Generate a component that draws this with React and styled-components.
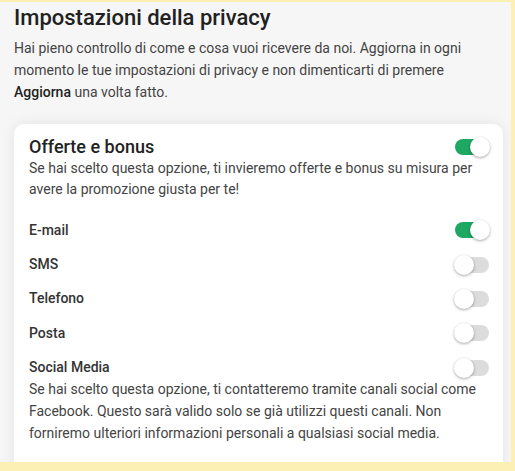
import React, { useState } from "react";
import styled, { createGlobalStyle } from "styled-components";

const Global = createGlobalStyle`
  html, body { margin: 0; padding: 0; background: #fdf0b4; }
  body { font-family: Roboto, "Noto Sans", Arial, sans-serif; }
  * { box-sizing: border-box; }
`;

const Frame = styled.div`
  width: 515px;
  height: 471px;
  background: #fdf0b4;
  padding: 2px 4px 9px 0;
`;

const Panel = styled.div`
  height: 460px;
  background: #f6f6f6;
  overflow: hidden;
  padding: 0 8px 0 14px;
`;

const Title = styled.h1`
  margin: 0;
  padding-top: 1.5px;
  font-size: 22px;
  line-height: 28px;
  font-weight: 500;
  color: #212121;
`;

const Intro = styled.p`
  margin: 5px 0 0;
  font-size: 14px;
  line-height: 22px;
  color: #444;
  strong { font-weight: 500; color: #222; }
`;

const Card = styled.section`
  margin-top: 21.5px;
  background: #fff;
  border-radius: 10px;
  box-shadow: 0 0 14px rgba(0, 0, 0, 0.08);
  padding: 12px 15px 20px;
`;

const Head = styled.div`
  display: flex;
  align-items: center;
  justify-content: space-between;
`;

const CardTitle = styled.h2`
  margin: 0;
  font-size: 18px;
  line-height: 22px;
  font-weight: 500;
  color: #222;
`;

const Desc = styled.p`
  margin: 0;
  font-size: 14px;
  line-height: ${(p) => p.$lh || "21px"};
  color: #444;
`;

const List = styled.div`
  margin-top: 13px;
`;

const Item = styled.div`
  padding: 6.7px 0;
`;

const Label = styled.span`
  font-size: 14px;
  line-height: 21px;
  font-weight: 500;
  color: #333;
`;

const SwitchBox = styled.button`
  position: relative;
  width: 36px;
  height: 20px;
  margin-right: -2px;
  padding: 0;
  border: 0;
  background: none;
  cursor: pointer;
  flex-shrink: 0;
`;

const Track = styled.span`
  position: absolute;
  left: 1px;
  right: 1px;
  top: 2px;
  height: 16px;
  border-radius: 8px;
  background: ${(p) => (p.$on ? "#1fa862" : "#dcdcdc")};
`;

const Thumb = styled.span`
  position: absolute;
  top: 0;
  left: ${(p) => (p.$on ? "16px" : "0")};
  width: 20px;
  height: 20px;
  border-radius: 50%;
  background: #fff;
  box-shadow: 0 1px 3px rgba(0, 0, 0, 0.35);
`;

function Switch({ on, onClick }) {
  return (
    <SwitchBox type="button" onClick={onClick} aria-pressed={on}>
      <Track $on={on} />
      <Thumb $on={on} />
    </SwitchBox>
  );
}

const channels = ["E-mail", "SMS", "Telefono", "Posta"];

export default function App() {
  const [state, setState] = useState({
    offers: true,
    "E-mail": true,
    SMS: false,
    Telefono: false,
    Posta: false,
    social: false,
  });
  const toggle = (k) => setState((s) => ({ ...s, [k]: !s[k] }));

  return (
    <>
      <Global />
      <Frame>
        <Panel>
          <Title>Impostazioni della privacy</Title>
          <Intro>
            Hai pieno controllo di come e cosa vuoi ricevere da noi. Aggiorna in ogni
            momento le tue impostazioni di privacy e non dimenticarti di premere{" "}
            <strong>Aggiorna</strong> una volta fatto.
          </Intro>
          <Card>
            <Head>
              <CardTitle>Offerte e bonus</CardTitle>
              <Switch on={state.offers} onClick={() => toggle("offers")} />
            </Head>
            <Desc>
              Se hai scelto questa opzione, ti invieremo offerte e bonus su misura per
              avere la promozione giusta per te!
            </Desc>
            <List>
              {channels.map((c) => (
                <Item key={c}>
                  <Head>
                    <Label>{c}</Label>
                    <Switch on={state[c]} onClick={() => toggle(c)} />
                  </Head>
                </Item>
              ))}
              <Item>
                <Head>
                  <Label>Social Media</Label>
                  <Switch on={state.social} onClick={() => toggle("social")} />
                </Head>
                <Desc $lh="22px">
                  Se hai scelto questa opzione, ti contatteremo tramite canali social come
                  Facebook. Questo sarà valido solo se già utilizzi questi canali. Non
                  forniremo ulteriori informazioni personali a qualsiasi social media.
                </Desc>
              </Item>
            </List>
          </Card>
        </Panel>
      </Frame>
    </>
  );
}
